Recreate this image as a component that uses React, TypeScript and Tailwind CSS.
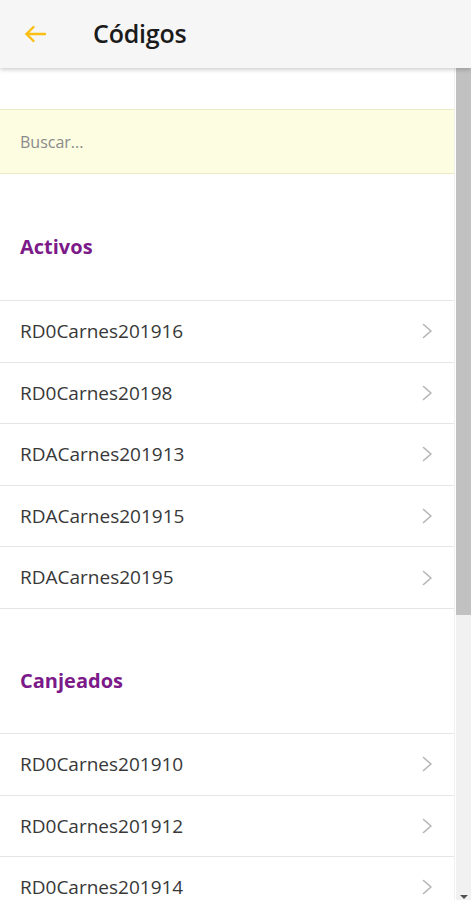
import React from 'react';

const activos = ['RD0Carnes201916', 'RD0Carnes20198', 'RDACarnes201913', 'RDACarnes201915', 'RDACarnes20195'];
const canjeados = ['RD0Carnes201910', 'RD0Carnes201912', 'RD0Carnes201914'];

const font = { fontFamily: '"Open Sans", "Noto Sans", sans-serif' };

const SectionTitle = ({ label, short }: { label: string; short?: boolean }) => (
  <div className={short ? 'h-[124px] pt-[59px] px-5' : 'h-[126px] pt-[60px] px-5'}>
    <h2 className="text-[20px] leading-[26px] font-bold text-[#7b1a88]">{label}</h2>
  </div>
);

const CodeRow = ({ code }: { code: string }) => (
  <div className="h-[61.6px] border-t border-[#e6e6e6] flex items-center justify-between pl-5 pr-[21px]">
    <span className="text-[19px] text-[#383838]">{code}</span>
    <svg width="11" height="16" viewBox="0 0 11 16" fill="none" stroke="#b4b4b4" strokeWidth="1.6" strokeLinecap="round" strokeLinejoin="round">
      <path d="M1.5 1.5L9 8l-7.5 6.5" />
    </svg>
  </div>
);

export default function App() {
  return (
    <div className="h-[900px] w-[471px] flex flex-col bg-white overflow-hidden" style={font}>
      {/* Header */}
      <header className="h-[68px] shrink-0 bg-[#f6f6f6] flex items-center relative z-10 shadow-[0_2px_4px_rgba(0,0,0,0.18)]">
        <button className="w-[70px] h-full flex items-center pl-[24px] text-[#f9bf14]">
          <svg width="23" height="18" viewBox="0 0 23 18" fill="none" stroke="currentColor" strokeWidth="2.4" strokeLinecap="round" strokeLinejoin="round">
            <path d="M21 9H2.5" />
            <path d="M9.5 2L2.5 9l7 7" />
          </svg>
        </button>
        <h1 className="ml-[23px] text-[25px] font-semibold text-[#1b1b1b] tracking-[-0.2px]">Códigos</h1>
      </header>

      <div className="flex-1 flex min-h-0">
        <main className="flex-1 overflow-hidden border-r border-[#f0f0f0] mr-[1px]">
          <div className="h-[41px]" />
          <div className="h-[65px] bg-[#fdfde1] border-y border-[#ece9c7] flex items-center px-5">
            <span className="text-[16px] text-[#8a8a8a]">Buscar...</span>
          </div>

          <SectionTitle label="Activos" />
          {activos.map(c => <CodeRow key={c} code={c} />)}
          <div className="border-t border-[#e6e6e6]" />

          <SectionTitle label="Canjeados" short />
          {canjeados.map(c => <CodeRow key={c} code={c} />)}
        </main>

        {/* Scrollbar */}
        <div className="w-[15px] shrink-0 bg-[#f1f1f1] flex flex-col">
          <div className="h-[547px] bg-[#c1c1c1]" />
          <div className="flex-1" />
          <div className="h-[10px] flex items-end justify-center pb-[1px]">
            <div className="w-0 h-0 border-l-[4px] border-r-[4px] border-t-[4px] border-l-transparent border-r-transparent border-t-[#505050]" />
          </div>
        </div>
      </div>
    </div>
  );
}
